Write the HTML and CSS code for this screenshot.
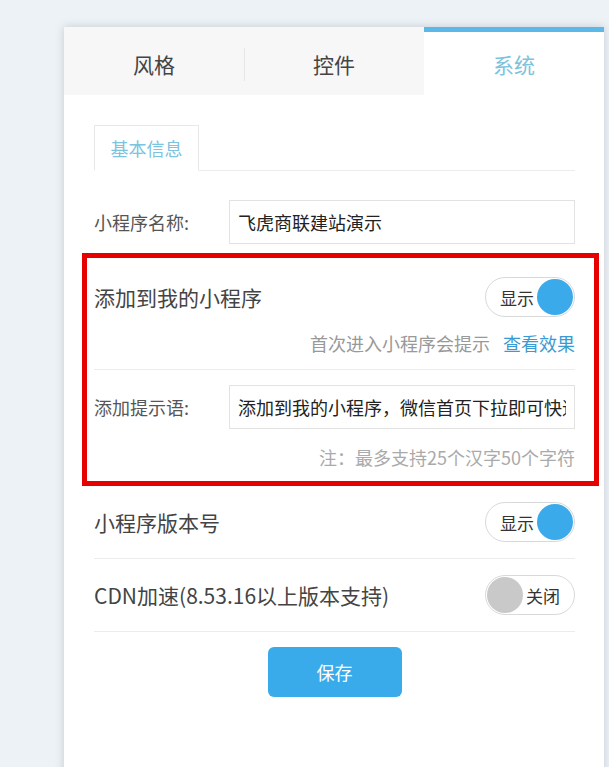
FILE: index.html
```html
<!DOCTYPE html>
<html lang="zh-CN">
<head>
<meta charset="utf-8">
<title>系统设置</title>
<link rel="stylesheet" href="styles.css">
</head>
<body>
<div class="page">
  <div class="card">
    <div class="tabs">
      <div class="tab">风格</div>
      <div class="tab">控件</div>
      <div class="tab active">系统</div>
    </div>
    <div class="content">
      <div class="subtabs">
        <div class="subtab">基本信息</div>
      </div>
      <div class="field name-field">
        <span class="label">小程序名称:</span>
        <input class="input" type="text" value="飞虎商联建站演示">
      </div>
      <div class="highlight">
        <div class="switch-row top">
          <span class="title">添加到我的小程序</span>
          <div class="switch on"><span class="switch-text">显示</span><span class="knob"></span></div>
        </div>
        <div class="hint"><span class="hint-text">首次进入小程序会提示</span><a class="link">查看效果</a></div>
        <div class="field tip-field">
          <span class="label">添加提示语:</span>
          <input class="input" type="text" value="添加到我的小程序，微信首页下拉即可快速访问">
        </div>
        <div class="note">注：最多支持25个汉字50个字符</div>
      </div>
      <div class="switch-row">
        <span class="title">小程序版本号</span>
        <div class="switch on"><span class="switch-text">显示</span><span class="knob"></span></div>
      </div>
      <div class="switch-row">
        <span class="title">CDN加速(8.53.16以上版本支持)</span>
        <div class="switch off"><span class="knob"></span><span class="switch-text">关闭</span></div>
      </div>
      <div class="actions">
        <button class="save">保存</button>
      </div>
    </div>
  </div>
</div>
</body>
</html>
```

FILE: styles.css
```css
* { box-sizing: border-box; }
html, body { margin: 0; padding: 0; }
body {
  background: #edf2f6;
  font-family: "Noto Sans CJK SC", "Noto Sans", sans-serif;
  color: #444;
  overflow: hidden;
}
.page {
  padding: 27px 0 0 64px;
  height: 767px;
}
.card {
  width: 540px;
  height: 760px;
  background: #fff;
  box-shadow: 0 0 8px rgba(120, 130, 150, 0.35);
}
.tabs {
  display: grid;
  grid-template-columns: 180px 180px 180px;
  height: 68px;
  background: #f7f7f7;
}
.tab {
  display: flex;
  align-items: center;
  justify-content: center;
  font-size: 21px;
  color: #444;
  position: relative;
  padding-top: 5px;
}
.tab:first-child::after {
  content: "";
  position: absolute;
  right: -1px;
  top: 21px;
  height: 33px;
  border-right: 1px solid #e6e6e6;
}
.tab.active {
  background: #fff;
  color: #7cc3de;
  border-top: 5px solid #5bb8e8;
  padding-top: 0;
}
.content {
  padding: 30px 29px 0 30px;
}
.subtabs {
  display: flex;
  border-bottom: 1px solid #ececec;
  height: 46px;
}
.subtab {
  width: 105px;
  height: 46px;
  border: 1px solid #e8e8e8;
  border-bottom: 1px solid #fff;
  display: flex;
  align-items: center;
  justify-content: center;
  font-size: 18px;
  color: #7cc3de;
}
.field {
  display: flex;
  align-items: center;
}
.label {
  width: 135px;
  font-size: 18px;
  color: #555;
  flex: none;
}
.input {
  flex: 1;
  min-width: 0;
  height: 44px;
  margin: 0;
  border: 1px solid #e2e2e2;
  border-radius: 0;
  padding: 0 8px;
  font-family: "Noto Sans CJK SC", "Noto Sans", sans-serif;
  font-size: 18px;
  color: #222;
  background: #fff;
  outline: none;
}
.name-field { margin-top: 29px; }
.highlight {
  margin: 9px -24px 0 -12px;
  border: 5px solid #e60000;
  padding: 0 19px 12px 7px;
}
.switch-row {
  display: flex;
  align-items: center;
  justify-content: space-between;
  padding: 16px 0;
  border-bottom: 1px solid #ececec;
}
.switch-row.top {
  padding: 19px 0 0;
  border-bottom: none;
}
.title {
  font-size: 21px;
  color: #444;
}
.switch {
  width: 90px;
  height: 40px;
  border: 1px solid #d9d9d9;
  border-radius: 20px;
  display: flex;
  align-items: center;
  padding: 0 1px 0 0;
  flex: none;
}
.switch.on { justify-content: flex-end; gap: 3px; }
.switch.off { justify-content: flex-start; padding: 0 0 0 1px; gap: 3px; }
.switch-text {
  font-size: 17px;
  color: #333;
}
.knob {
  width: 36px;
  height: 36px;
  border-radius: 50%;
  background: #3aaaeb;
}
.switch.off .knob { background: #c9c9c9; }
.hint {
  display: flex;
  justify-content: flex-end;
  align-items: center;
  gap: 13px;
  font-size: 18px;
  line-height: 24px;
  margin-top: 14px;
  padding-bottom: 14px;
  border-bottom: 1px solid #ececec;
}
.hint-text { color: #999; }
.link { color: #3a9bd3; }
.tip-field { margin-top: 15px; }
.note {
  text-align: right;
  font-size: 18px;
  line-height: 24px;
  color: #aaa;
  margin-top: 16px;
}
.actions {
  display: flex;
  justify-content: center;
  padding-top: 15px;
}
.save {
  width: 134px;
  height: 50px;
  border: none;
  border-radius: 6px;
  background: #3aabea;
  color: #fff;
  font-family: "Noto Sans CJK SC", sans-serif;
  font-size: 18px;
}
```
